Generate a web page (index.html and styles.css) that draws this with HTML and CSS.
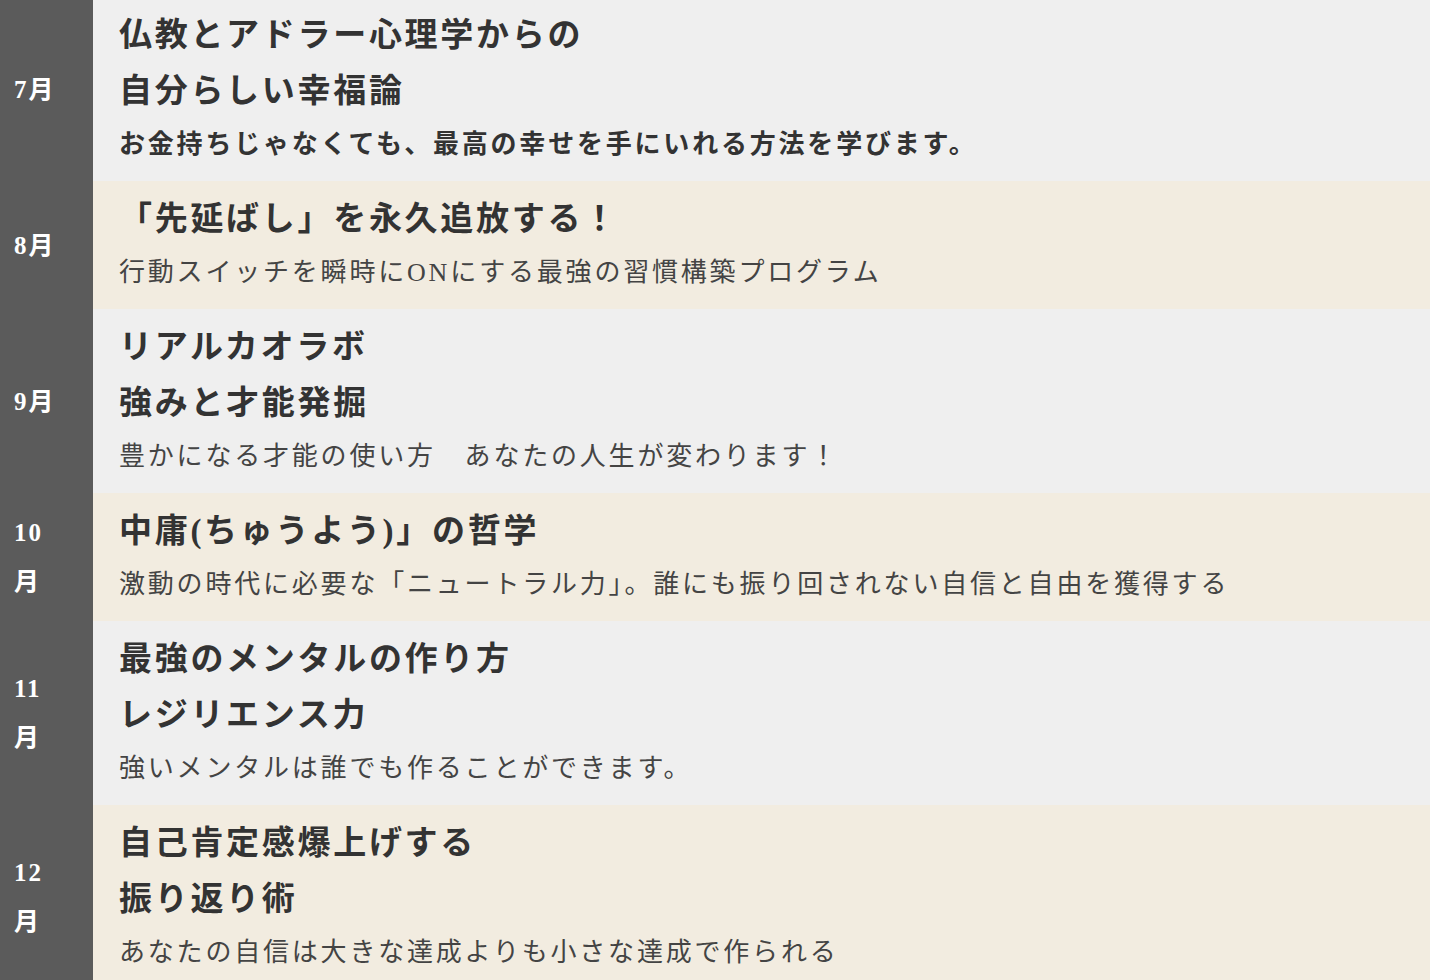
FILE: index.html
```html
<!DOCTYPE html>
<html lang="ja">
<head>
<meta charset="utf-8">
<title>年間プログラム</title>
<link rel="stylesheet" href="styles.css">
</head>
<body>
<div class="schedule">
  <div class="row light">
    <div class="month">7月</div>
    <div class="content">
      <div class="title">仏教とアドラー心理学からの<br>自分らしい幸福論</div>
      <div class="sub bold">お金持ちじゃなくても、最高の幸せを手にいれる方法を学びます。</div>
    </div>
  </div>
  <div class="row beige">
    <div class="month">8月</div>
    <div class="content">
      <div class="title">「先延ばし」を永久追放する！</div>
      <div class="sub">行動スイッチを瞬時にONにする最強の習慣構築プログラム</div>
    </div>
  </div>
  <div class="row light">
    <div class="month">9月</div>
    <div class="content">
      <div class="title">リアルカオラボ<br>強みと才能発掘</div>
      <div class="sub">豊かになる才能の使い方　あなたの人生が変わります！</div>
    </div>
  </div>
  <div class="row beige">
    <div class="month">10月</div>
    <div class="content">
      <div class="title">中庸(ちゅうよう)」の哲学</div>
      <div class="sub">激動の時代に必要な「ニュートラル力」。誰にも振り回されない自信と自由を獲得する</div>
    </div>
  </div>
  <div class="row light">
    <div class="month">11月</div>
    <div class="content">
      <div class="title">最強のメンタルの作り方<br>レジリエンス力</div>
      <div class="sub">強いメンタルは誰でも作ることができます。</div>
    </div>
  </div>
  <div class="row beige">
    <div class="month">12月</div>
    <div class="content">
      <div class="title">自己肯定感爆上げする<br>振り返り術</div>
      <div class="sub">あなたの自信は大きな達成よりも小さな達成で作られる</div>
    </div>
  </div>
</div>
</body>
</html>
```
FILE: styles.css
```css
html, body {
  margin: 0;
  padding: 0;
  background: #efefef;
  overflow: hidden;
}
body {
  font-family: "Liberation Serif", "Noto Sans CJK JP", serif;
  color: #333;
}
.schedule {
  margin-top: -3px;
  display: flex;
  flex-direction: column;
}
.row {
  display: grid;
  grid-template-columns: 93px 1fr;
}
.light .content { background: #efefef; }
.beige .content { background: #f2ece0; }
.month {
  background: #5b5b5b;
  color: #fff;
  font-weight: bold;
  font-size: 25px;
  line-height: 49px;
  letter-spacing: 2px;
  padding-left: 14px;
  padding-right: 30px;
  display: flex;
  align-items: center;
}
.content {
  padding: 10px 0 11px 26px;
}
.title {
  font-size: 33px;
  font-weight: bold;
  line-height: 56px;
  letter-spacing: 2.7px;
  color: #333;
}
.sub {
  font-size: 26px;
  line-height: 51px;
  letter-spacing: 2.8px;
  color: #444;
}
.sub.bold {
  font-weight: bold;
  color: #333;
}
```
